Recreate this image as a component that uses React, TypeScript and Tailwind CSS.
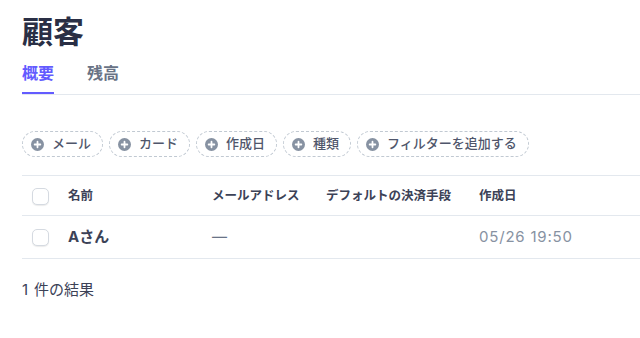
import React from "react";

const FONT = { fontFamily: 'Inter, "Noto Sans CJK JP", "Noto Sans", sans-serif' };

const FILTERS = ["メール", "カード", "作成日", "種類", "フィルターを追加する"];

function PlusCircle() {
  return (
    <svg width="13" height="13" viewBox="0 0 16 16" className="shrink-0">
      <circle cx="8" cy="8" r="8" fill="#8792a2" />
      <path d="M8 4.5v7M4.5 8h7" stroke="#fff" strokeWidth="2.2" strokeLinecap="round" />
    </svg>
  );
}

function Checkbox() {
  return (
    <span className="block h-[17px] w-[17px] rounded-[5px] border border-[#d5dae1] bg-white shadow-[0_1px_1px_rgba(0,0,0,0.08)]" />
  );
}

export default function App() {
  return (
    <div className="h-[338px] w-[640px] overflow-hidden bg-white pl-[22px] text-[#3c4257]" style={FONT}>
      <h1 className="pt-[12px] text-[31px] font-bold leading-[40px] text-[#2a2f45]">顧客</h1>

      <div className="mt-[10px] flex gap-[33px] border-b border-[#e3e8ee]">
        <div className="border-b-2 border-[#635bff] pb-[8px] text-[16px] font-semibold leading-[22px] text-[#635bff]">
          概要
        </div>
        <div className="pb-[8px] text-[16px] font-semibold leading-[22px] text-[#697386]">残高</div>
      </div>

      <div className="mt-[36px] flex gap-[6px]">
        {FILTERS.map((f) => (
          <div
            key={f}
            className="flex h-[26px] items-center gap-[8px] rounded-full border border-dashed border-[#c1c9d2] pl-[8px] pr-[11px] text-[13px] font-medium text-[#4f566b]"
          >
            <PlusCircle />
            <span>{f}</span>
          </div>
        ))}
      </div>

      <div className="mt-[18px] border-t border-[#e3e8ee]">
        <div className="flex h-[40px] items-center border-b border-[#e3e8ee] pt-[1px] text-[12.5px] font-semibold text-[#3c4257]">
          <div className="w-[46px] pl-[10px]">
            <Checkbox />
          </div>
          <div className="w-[144px]">名前</div>
          <div className="w-[114px]">メールアドレス</div>
          <div className="w-[153px]">デフォルトの決済手段</div>
          <div>作成日</div>
        </div>
        <div className="flex h-[43px] items-center border-b border-[#e3e8ee] pt-[1px] text-[15px]">
          <div className="w-[46px] pl-[10px]">
            <Checkbox />
          </div>
          <div className="w-[144px] font-bold text-[#3c4257]">Aさん</div>
          <div className="w-[114px] text-[#697386]">—</div>
          <div className="w-[153px]"></div>
          <div className="tracking-[0.8px] text-[#8792a2]">05/26 19:50</div>
        </div>
      </div>

      <div className="mt-[20px] flex text-[15px] text-[#3c4257]">
        <span className="mr-[6px]">1</span>
        <span>件の結果</span>
      </div>
    </div>
  );
}
